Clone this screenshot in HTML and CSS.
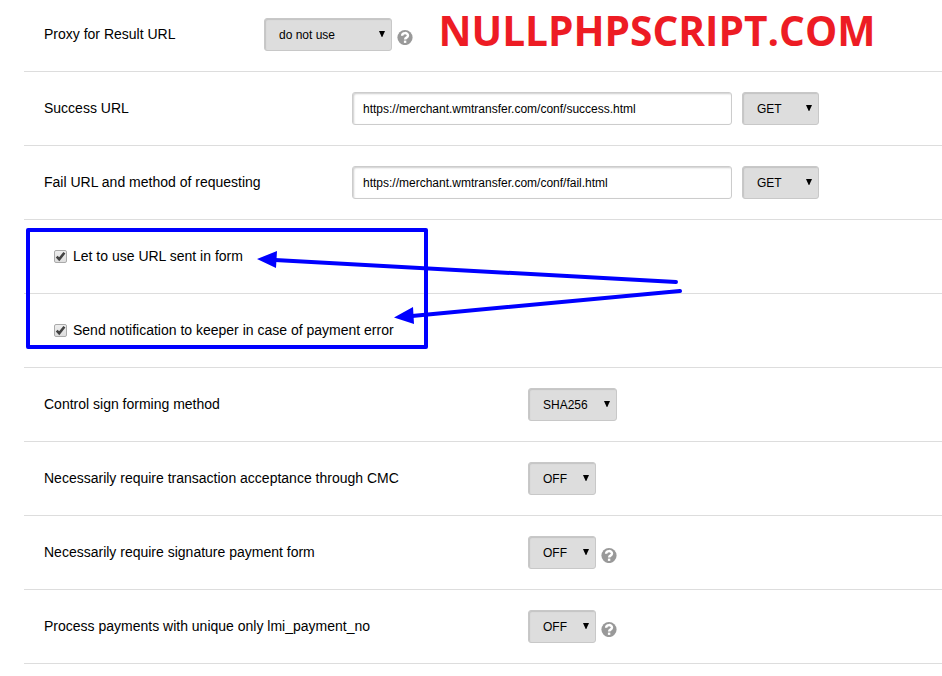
FILE: index.html
```html
<!DOCTYPE html>
<html lang="en">
<head>
<meta charset="utf-8">
<title>Merchant settings</title>
<link rel="stylesheet" href="styles.css">
</head>
<body>
<svg class="defs" width="0" height="0" aria-hidden="true">
  <symbol id="help" viewBox="0 0 16 16">
    <circle cx="8" cy="8.5" r="7.6" fill="#999"/>
    <path d="M5.1 6.8C5.1 3.2 11 3.2 11 6.6C11 8.7 8.1 8.5 8.1 10.4" fill="none" stroke="#fff" stroke-width="2.4"/>
    <rect x="6.9" y="11.6" width="2.4" height="2.3" fill="#fff"/>
  </symbol>
  <symbol id="arrow" viewBox="0 0 6 6"><path d="M0 0H6L3.3 6H2.7Z" fill="#000"/></symbol>
  <symbol id="check" viewBox="0 0 11 11"><path d="M1.7 5.7L4.2 8.2L9.4 1.8" fill="none" stroke="#444" stroke-width="2.6"/></symbol>
</svg>
<form class="settings">
  <div class="row first">
    <label class="label proxy">Proxy for Result URL</label>
    <div class="select wide"><span>do not use</span><svg class="caret"><use href="#arrow"/></svg></div>
    <svg class="help"><use href="#help"/></svg>
  </div>
  <div class="row">
    <label class="label url">Success URL</label>
    <div class="input">https://merchant.wmtransfer.com/conf/success.html</div>
    <div class="select method"><span>GET</span><svg class="caret"><use href="#arrow"/></svg></div>
  </div>
  <div class="row">
    <label class="label url">Fail URL and method of requesting</label>
    <div class="input">https://merchant.wmtransfer.com/conf/fail.html</div>
    <div class="select method"><span>GET</span><svg class="caret"><use href="#arrow"/></svg></div>
  </div>
  <div class="row option">
    <svg class="checkbox"><use href="#check"/></svg>
    <label class="label">Let to use URL sent in form</label>
  </div>
  <div class="row option">
    <svg class="checkbox"><use href="#check"/></svg>
    <label class="label">Send notification to keeper in case of payment error</label>
  </div>
  <div class="row">
    <label class="label long">Control sign forming method</label>
    <div class="select hash"><span>SHA256</span><svg class="caret"><use href="#arrow"/></svg></div>
  </div>
  <div class="row">
    <label class="label long">Necessarily require transaction acceptance through CMC</label>
    <div class="select toggle"><span>OFF</span><svg class="caret"><use href="#arrow"/></svg></div>
  </div>
  <div class="row">
    <label class="label long">Necessarily require signature payment form</label>
    <div class="select toggle"><span>OFF</span><svg class="caret"><use href="#arrow"/></svg></div>
    <svg class="help"><use href="#help"/></svg>
  </div>
  <div class="row">
    <label class="label long">Process payments with unique only lmi_payment_no</label>
    <div class="select toggle"><span>OFF</span><svg class="caret"><use href="#arrow"/></svg></div>
    <svg class="help"><use href="#help"/></svg>
  </div>
</form>
<svg class="annotations" viewBox="0 0 942 676">
  <text class="watermark" x="438.5" y="46" textLength="437" lengthAdjust="spacingAndGlyphs">NULLPHPSCRIPT.COM</text>
  <rect class="mark" x="28" y="230" width="398" height="117"/>
  <path class="mark" d="M275 260L676 282M412 316L680 291"/>
  <path class="head" d="M257 259L277 251L276 268ZM394 317.5L413 307L414 324Z"/>
</svg>
</body>
</html>
```
FILE: styles.css
```css
* { box-sizing: border-box; }

body {
  margin: 0;
  background: #fff;
  color: #000;
  font-family: "Liberation Sans", Arial, sans-serif;
  font-size: 14px;
  height: 676px;
  overflow: hidden;
}

.defs { position: absolute; }

.settings { margin-left: 24px; }

.row {
  display: flex;
  align-items: flex-start;
  height: 74px;
  padding: 20px 0 0 20px;
  border-bottom: 1px solid #ddd;
}

.row.first { height: 72px; padding-top: 18px; }
.row.option { padding-left: 30px; }

.label { line-height: 32px; white-space: nowrap; flex: none; }
.proxy { width: 220px; }
.url { width: 308px; }
.long { width: 484px; }

.select, .input {
  flex: none;
  height: 33px;
  border: 1px solid #ccc;
  border-radius: 3px;
  font-size: 12px;
  line-height: 32px;
  white-space: nowrap;
}

.select {
  display: flex;
  justify-content: space-between;
  padding: 0 6px 0 14px;
  background: #ddd;
  border-color: #c8c8c8;
  box-shadow: inset 1px 1px 1px #c4c4c4;
}

.input {
  width: 380px;
  margin-right: 10px;
  padding-left: 10px;
  background: #fff;
  box-shadow: inset 1px 1px 2px #ccc;
}

.wide { width: 128px; }
.method { width: 77px; }
.hash { width: 89px; }
.toggle { width: 68px; }

.caret { width: 6px; height: 6px; margin-top: 12px; }
.help { width: 16px; height: 16px; margin: 11px 0 0 5px; }

.checkbox {
  flex: none;
  width: 13px;
  height: 13px;
  margin: 10px 6px 0 0;
  border: 1px solid #aaa;
  border-radius: 2px;
  background: linear-gradient(#eee, #ddd);
}

.annotations {
  position: absolute;
  top: 0;
  left: 0;
  width: 942px;
  height: 676px;
}

.watermark {
  font-family: "Open Sans", sans-serif;
  font-weight: 700;
  font-size: 42px;
  fill: #ed1c24;
}

.mark {
  fill: none;
  stroke: #00f;
  stroke-width: 4;
  stroke-linecap: round;
  stroke-linejoin: round;
}

.head { fill: #00f; }
```
